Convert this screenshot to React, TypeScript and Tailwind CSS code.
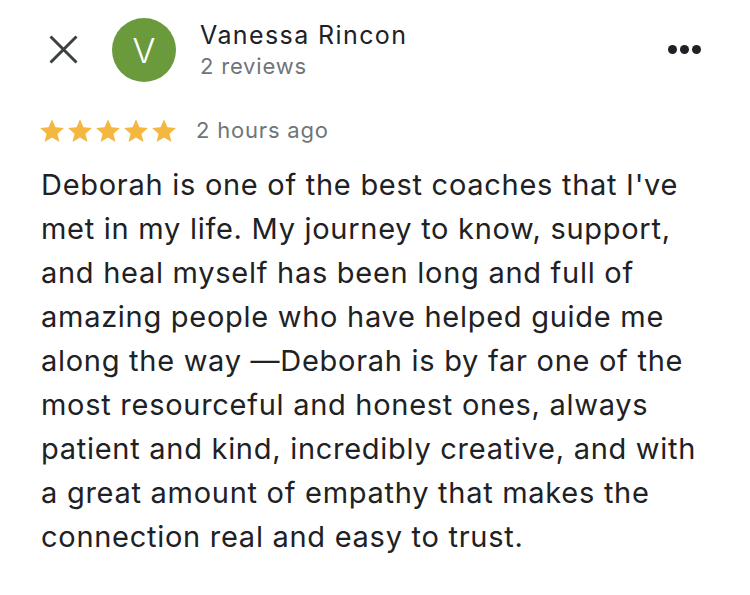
import React from "react";

const lines = [
  "Deborah is one of the best coaches that I've",
  "met in my life. My journey to know, support,",
  "and heal myself has been long and full of",
  "amazing people who have helped guide me",
  "along the way —Deborah is by far one of the",
  "most resourceful and honest ones, always",
  "patient and kind, incredibly creative, and with",
  "a great amount of empathy that makes the",
  "connection real and easy to trust.",
];

const Star: React.FC = () => (
  <svg viewBox="0 0 24 24" className="w-[28px] h-[28px]" fill="#f4b740">
    <path d="M12 2l2.95 6.75 7.3.65-5.55 4.85 1.65 7.15L12 17.6l-6.35 3.8 1.65-7.15L1.75 9.4l7.3-.65z" />
  </svg>
);

const App: React.FC = () => {
  return (
    <div
      className="w-[750px] h-[595px] bg-white text-[#202124] overflow-hidden"
      style={{ fontFamily: "Inter, 'Liberation Sans', sans-serif" }}
    >
      <div className="flex items-start pt-[18px] pl-[49px] pr-[40px]">
        <svg viewBox="0 0 29 29" className="w-[29px] h-[29px] mt-[17px] shrink-0" stroke="#3c4043" strokeWidth="3">
          <path d="M1.5 1.5l26 26M27.5 1.5l-26 26" />
        </svg>
        <div className="w-[64px] h-[64px] rounded-full bg-[#6b9a3c] flex items-center justify-center text-white text-[34px] font-light ml-[34px] shrink-0">
          V
        </div>
        <div className="ml-[24px] flex flex-col">
          <div className="text-[25px] leading-[34px] tracking-[1.4px] text-[#202124]">Vanessa Rincon</div>
          <div className="text-[22px] leading-[28px] tracking-[0.8px] text-[#70757a]">2 reviews</div>
        </div>
        <div className="ml-auto flex gap-[3px] mt-[27px] mr-[9px]">
          <span className="w-[9px] h-[9px] rounded-full bg-[#202124]" />
          <span className="w-[9px] h-[9px] rounded-full bg-[#202124]" />
          <span className="w-[9px] h-[9px] rounded-full bg-[#202124]" />
        </div>
      </div>
      <div className="flex items-center pl-[38px] mt-[32px]">
        <div className="flex">
          <Star />
          <Star />
          <Star />
          <Star />
          <Star />
        </div>
        <span className="ml-[18px] text-[22px] tracking-[0.8px] text-[#70757a]">2 hours ago</span>
      </div>
      <div className="pl-[41px] mt-[16px] text-[29px] leading-[44px] tracking-[0.72px] text-[#202124]">
        {lines.map((l, i) => (
          <div key={i} className="whitespace-nowrap">{l}</div>
        ))}
      </div>
    </div>
  );
};

export default App;
